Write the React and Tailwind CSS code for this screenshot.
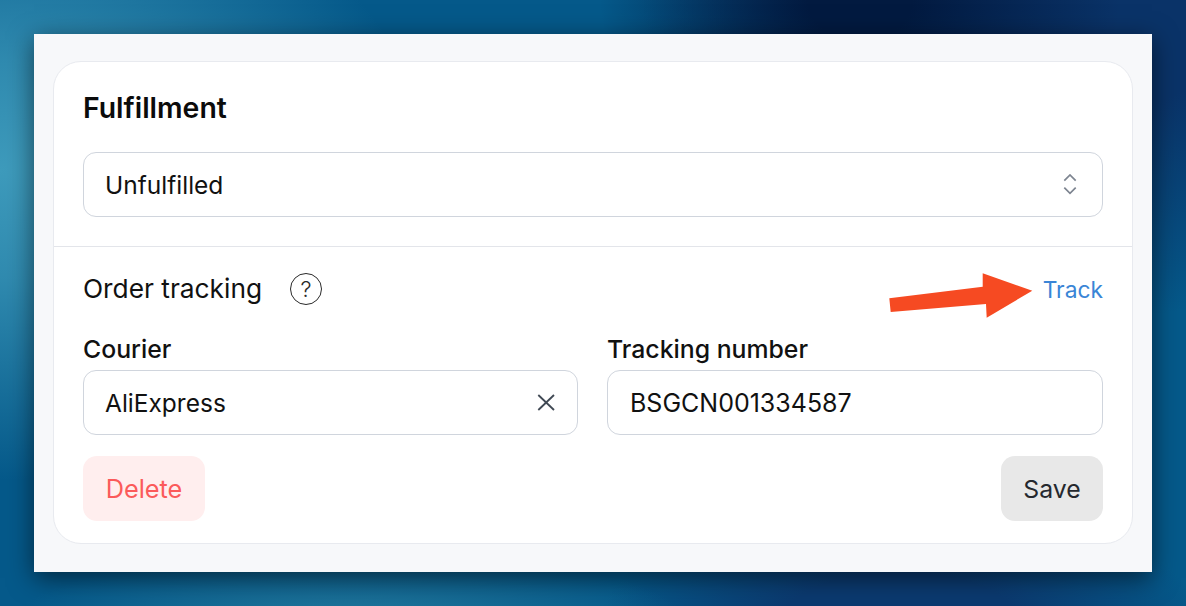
import React from 'react'

const Chevrons = () => (
  <svg width="14" height="21" viewBox="0 0 14 21" fill="none" stroke="#7d8490" strokeWidth="1.7">
    <path d="M1.3 6.7 7 1l5.7 5.7" />
    <path d="M1.3 13.7 7 19.3l5.7-5.6" />
  </svg>
)

const Close = () => (
  <svg width="18" height="17" viewBox="0 0 18 17" fill="none" stroke="#3f4853" strokeWidth="1.8">
    <path d="M1.3 1 17 16" />
    <path d="M17 1 1.3 16" />
  </svg>
)

const Arrow = () => (
  <svg className="absolute left-[806px] top-0" width="146" height="46" viewBox="0 0 146 46">
    <polygon fill="#f64a22" points="0.3,25.3 93.7,13.7 93.7,0.3 143.3,17.7 97.7,44.7 97,31 1.7,39" />
  </svg>
)

export default function App() {
  return (
    <div className="w-[1186px] h-[606px] overflow-hidden px-[34px] pt-[34px] font-['Inter',sans-serif] bg-[radial-gradient(ellipse_430px_310px_at_0px_170px,#3e9bbc_0%,rgba(62,155,188,0.75)_35%,rgba(62,155,188,0)_100%),radial-gradient(ellipse_260px_200px_at_860px_0px,#021a40_0%,#021a40_20%,rgba(2,26,64,0)_100%),radial-gradient(ellipse_440px_340px_at_1080px_-20px,#0a3368_0%,#0a3368_40%,rgba(10,51,104,0)_100%),radial-gradient(ellipse_340px_75px_at_350px_625px,#237a9e_0%,rgba(35,122,158,0)_100%),radial-gradient(ellipse_300px_130px_at_900px_625px,#0b3a70_0%,#0b3a70_40%,rgba(11,58,112,0)_100%),linear-gradient(#05598a,#05598a)]">
      <div className="bg-[#f7f8fa] px-[19px] pt-[27px] pb-[28px] shadow-[0_6px_24px_rgba(0,0,0,0.55)]">
        <div className="bg-white border border-[#e8eaef] rounded-[28px]">
          {/* Fulfillment status */}
          <div className="px-[29px] pt-[30px] pb-[29px] border-b border-[#e3e5ea]">
            <h2 className="text-[28.4px] leading-[32px] font-semibold text-[#0b0b0b]">Fulfillment</h2>
            <div className="mt-[28px] h-[65px] flex items-center justify-between pl-[21px] pr-[25px] border border-[#d0d5dd] rounded-[13px]">
              <span className="pt-[2px] text-[24.5px] text-[#111]">Unfulfilled</span>
              <Chevrons />
            </div>
          </div>

          {/* Order tracking */}
          <div className="px-[29px] pt-[26px] pb-[22px]">
            <div className="relative h-[32px] flex items-center justify-between">
              <div className="flex items-center gap-[28px]">
                <span className="text-[26.3px] text-[#111]">Order tracking</span>
                <span className="w-[32px] h-[32px] flex items-center justify-center rounded-full border border-[#2a2a2a] text-[22px] font-light text-[#2a2a2a]">?</span>
              </div>
              <a className="pt-[2px] text-[22.8px] text-[#3a85d6]">Track</a>
              <Arrow />
            </div>

            <div className="mt-[30px] grid grid-cols-[495px_1fr] gap-[29px]">
              <div>
                <label className="block mb-[7px] h-[28px] text-[24.8px] leading-[28px] font-medium text-[#111]">Courier</label>
                <div className="h-[65px] flex items-center justify-between pl-[21px] pr-[22px] border border-[#d0d5dd] rounded-[13px]">
                  <span className="pt-[2px] text-[24.5px] text-[#111]">AliExpress</span>
                  <Close />
                </div>
              </div>
              <div>
                <label className="block mb-[7px] h-[28px] text-[24.8px] leading-[28px] font-medium text-[#111]">Tracking number</label>
                <div className="h-[65px] flex items-center pl-[22px] pr-[23px] border border-[#d0d5dd] rounded-[13px]">
                  <span className="pt-[2px] text-[25px] text-[#111]">BSGCN001334587</span>
                </div>
              </div>
            </div>

            <div className="mt-[21px] flex justify-between">
              <button className="w-[122px] h-[65px] pt-[1px] rounded-[14px] bg-[#ffeeee] text-[25.3px] text-[#fb5a5a]">Delete</button>
              <button className="w-[102px] h-[65px] pt-[3px] rounded-[14px] bg-[#e8e8e8] text-[24.8px] text-[#25282e]">Save</button>
            </div>
          </div>
        </div>
      </div>
    </div>
  )
}
